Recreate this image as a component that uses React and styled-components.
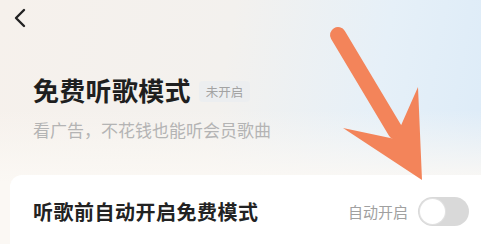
import React from 'react';
import styled, { createGlobalStyle } from 'styled-components';

const GlobalStyle = createGlobalStyle`
  html, body {
    margin: 0;
    padding: 0;
  }
  body {
    font-family: "Noto Sans CJK SC", "Noto Sans", sans-serif;
    background: #faf7f3;
  }
`;

const Page = styled.div`
  position: relative;
  width: 481px;
  height: 244px;
  overflow: hidden;
  background:
    linear-gradient(180deg, rgba(250, 247, 243, 0) 0%, rgba(250, 247, 243, 0) 45%, #fbf8f4 75%),
    linear-gradient(100deg, #f6f1ec 0%, #f3f1ee 45%, #e6f0f8 75%, #dcebf8 100%);
`;

const TopBar = styled.div`
  height: 36px;
  display: flex;
  align-items: center;
  padding-left: 10px;
`;

const BackButton = styled.button`
  width: 20px;
  height: 24px;
  padding: 0;
  border: none;
  background: none;
  display: flex;
  align-items: center;
  justify-content: center;
  cursor: pointer;
`;

const Intro = styled.div`
  padding: 38px 33px 0;
`;

const TitleRow = styled.div`
  display: flex;
  align-items: center;
  gap: 8px;
`;

const Title = styled.h1`
  margin: 0;
  font-size: 26px;
  line-height: 31px;
  font-weight: 700;
  letter-spacing: 0.3px;
  color: #1f1f1f;
`;

const Badge = styled.span`
  margin-top: 4px;
  height: 21px;
  padding: 0 7px;
  display: inline-flex;
  align-items: center;
  border-radius: 4px;
  background: #eceef0;
  color: #a3a3a3;
  font-size: 12.5px;
`;

const Subtitle = styled.p`
  margin: 13px 0 0;
  font-size: 17px;
  line-height: 24px;
  color: #b4b4b4;
`;

const Card = styled.div`
  margin: 33px 0 0 10px;
  height: 72px;
  padding: 0 12px 0 23px;
  display: flex;
  align-items: center;
  justify-content: space-between;
  background: #ffffff;
  border-radius: 12px 0 0 0;
`;

const RowLabel = styled.span`
  font-size: 20px;
  font-weight: 600;
  letter-spacing: 0.5px;
  color: #222222;
`;

const RowRight = styled.div`
  display: flex;
  align-items: center;
  gap: 10px;
`;

const Hint = styled.span`
  font-size: 15px;
  color: #a0a0a0;
`;

const Switch = styled.div`
  width: 51px;
  height: 29px;
  border-radius: 15px;
  background: ${(p) => (p.$on ? '#f08456' : '#d9d9d9')};
  display: flex;
  align-items: center;
  justify-content: ${(p) => (p.$on ? 'flex-end' : 'flex-start')};
  padding: 0 2px;
  box-sizing: border-box;
`;

const Knob = styled.div`
  width: 25px;
  height: 25px;
  border-radius: 50%;
  background: #ffffff;
  box-shadow: 0 0 0 1px #e2e2e2;
`;

const Arrow = styled.svg`
  position: absolute;
  left: 0;
  top: 0;
  pointer-events: none;
`;

export default function App() {
  return (
    <>
      <GlobalStyle />
      <Page>
        <TopBar>
          <BackButton aria-label="返回">
            <svg width="14" height="20" viewBox="0 0 14 20">
              <polyline
                points="11,2 3,10 11,18"
                fill="none"
                stroke="#222"
                strokeWidth="2.4"
                strokeLinecap="round"
                strokeLinejoin="round"
              />
            </svg>
          </BackButton>
        </TopBar>
        <Intro>
          <TitleRow>
            <Title>免费听歌模式</Title>
            <Badge>未开启</Badge>
          </TitleRow>
          <Subtitle>看广告，不花钱也能听会员歌曲</Subtitle>
        </Intro>
        <Card>
          <RowLabel>听歌前自动开启免费模式</RowLabel>
          <RowRight>
            <Hint>自动开启</Hint>
            <Switch>
              <Knob />
            </Switch>
          </RowRight>
        </Card>
        <Arrow width="481" height="244" viewBox="0 0 481 244">
          <line x1="338" y1="35" x2="396" y2="132" stroke="#f3845a" strokeWidth="16" strokeLinecap="round" />
          <polygon points="343,128 395,139 418,87 422,180" fill="#f3845a" />
        </Arrow>
      </Page>
    </>
  );
}
